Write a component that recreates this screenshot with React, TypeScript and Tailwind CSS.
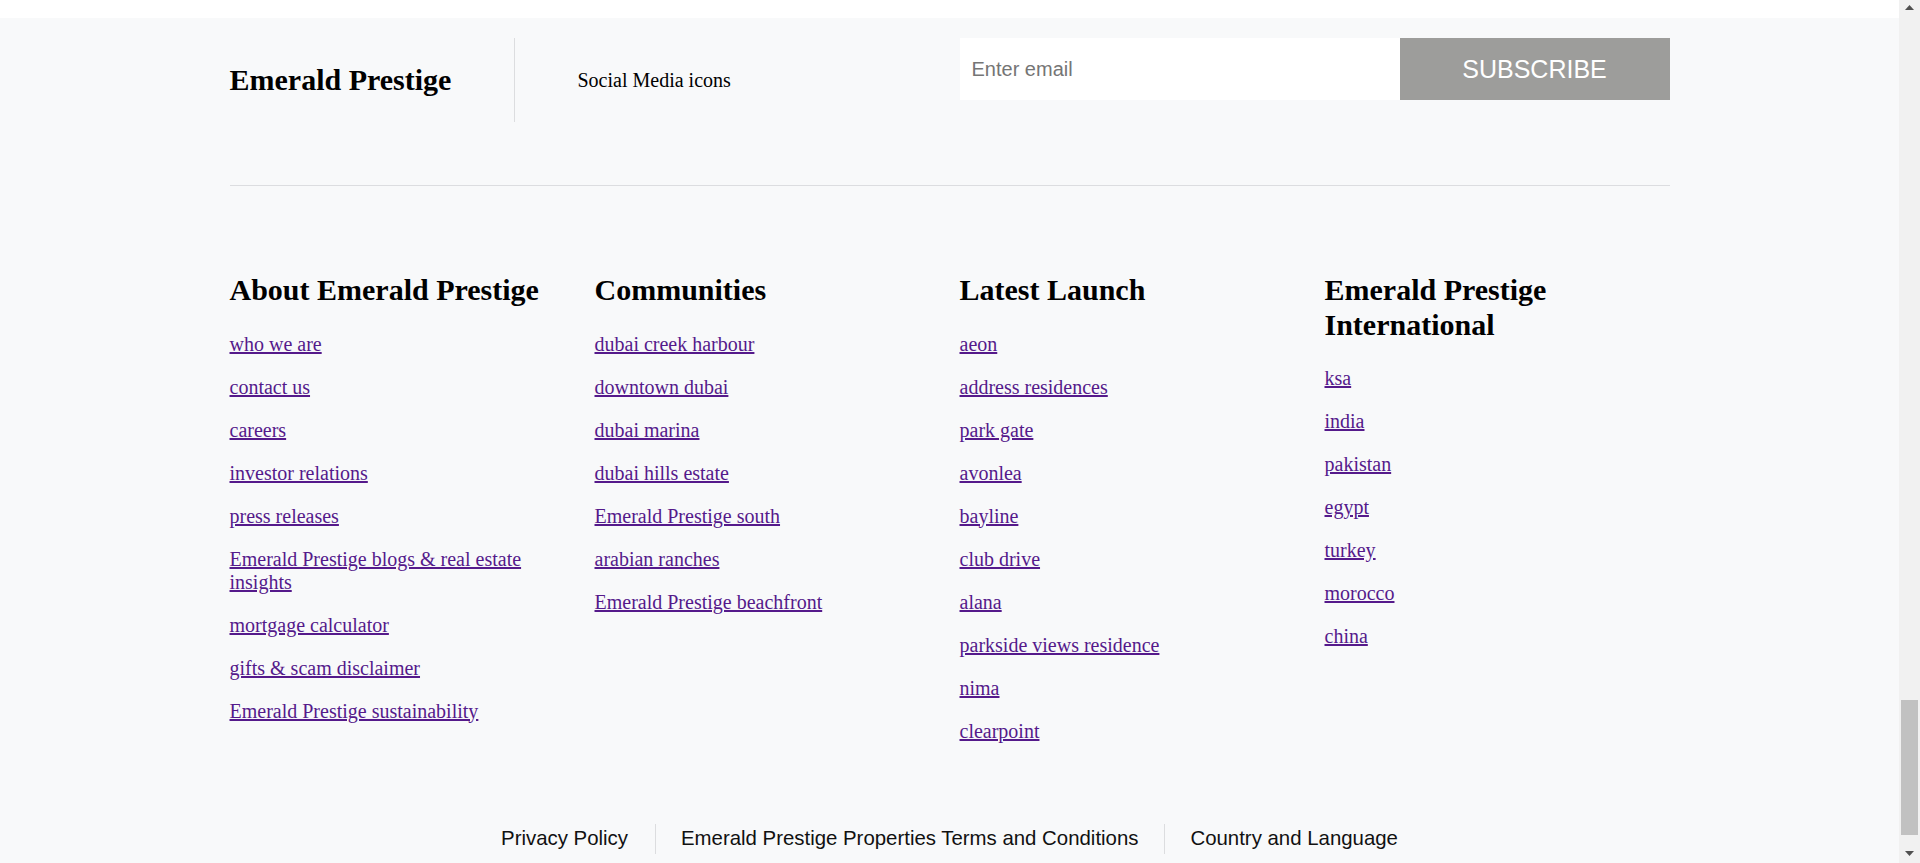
import React from "react";

const serif = "font-['Liberation_Serif','Times_New_Roman',serif]";
const sans = "font-['Liberation_Sans',Arial,sans-serif]";

const columns: { title: string[]; links: string[] }[] = [
  {
    title: ["About Emerald Prestige"],
    links: [
      "who we are",
      "contact us",
      "careers",
      "investor relations",
      "press releases",
      "Emerald Prestige blogs & real estate insights",
      "mortgage calculator",
      "gifts & scam disclaimer",
      "Emerald Prestige sustainability",
    ],
  },
  {
    title: ["Communities"],
    links: [
      "dubai creek harbour",
      "downtown dubai",
      "dubai marina",
      "dubai hills estate",
      "Emerald Prestige south",
      "arabian ranches",
      "Emerald Prestige beachfront",
    ],
  },
  {
    title: ["Latest Launch"],
    links: [
      "aeon",
      "address residences",
      "park gate",
      "avonlea",
      "bayline",
      "club drive",
      "alana",
      "parkside views residence",
      "nima",
      "clearpoint",
    ],
  },
  {
    title: ["Emerald Prestige", "International"],
    links: ["ksa", "india", "pakistan", "egypt", "turkey", "morocco", "china"],
  },
];

export default function App() {
  return (
    <div className="flex h-[863px] w-[1920px] overflow-hidden bg-white">
      <div className="flex flex-1 flex-col">
        <div className="h-[18px] bg-white" />
        <footer className="flex-1 bg-[#f8f9fa] text-black">
          <div className="mx-auto w-[1440px] pt-[20px]">
            {/* top row */}
            <div className="flex items-start">
              <div className="flex h-[84px] w-[285px] items-center border-r border-[#dcdddf]">
                <span className={`${serif} text-[30px] font-bold leading-[1.15]`}>
                  Emerald Prestige
                </span>
              </div>
              <div className="flex h-[84px] items-center pl-[63px]">
                <span className={`${serif} text-[20px] leading-[1.15]`}>Social Media icons</span>
              </div>
              <form className="ml-auto flex h-[62px] w-[710px]" onSubmit={(e) => e.preventDefault()}>
                <input
                  type="email"
                  placeholder="Enter email"
                  className={`${sans} h-full w-[440px] bg-white px-3 text-[20px] text-black outline-none placeholder:text-[#757575]`}
                />
                <button
                  type="submit"
                  className={`${sans} flex h-full flex-1 items-center justify-center bg-[#9d9d9b] pt-px text-[25px] text-white`}
                >
                  SUBSCRIBE
                </button>
              </form>
            </div>

            <div className="mt-[63px] h-px bg-[#dcdde0]" />

            {/* link columns */}
            <div className="grid grid-cols-4 gap-x-5 pt-[87px]">
              {columns.map((col) => (
                <div key={col.title.join(" ")} className={serif}>
                  <h2 className="mb-[25px] text-[30px] font-bold leading-[1.15]">
                    {col.title.map((t, i) => (
                      <React.Fragment key={t}>
                        {i > 0 && <br />}
                        {t}
                      </React.Fragment>
                    ))}
                  </h2>
                  <ul className="flex flex-col gap-5">
                    {col.links.map((l) => (
                      <li key={l} className="pr-6 text-[20px] leading-[23px]">
                        <a href="#" className="text-[#551a8b] underline">
                          {l}
                        </a>
                      </li>
                    ))}
                  </ul>
                </div>
              ))}
            </div>

            {/* bottom links */}
            <div className={`${sans} mt-[81px] flex justify-center text-[20.4px] text-[#111]`}>
              <span className="flex h-[30px] items-center pl-[26px] pr-[27px]">Privacy Policy</span>
              <span className="flex h-[30px] items-center border-l border-[#dcdddf] pl-[25px] pr-[26px]">
                Emerald Prestige Properties Terms and Conditions
              </span>
              <span className="flex h-[30px] items-center border-l border-[#dcdddf] pl-[25px] pr-[26px]">
                Country and Language
              </span>
            </div>
          </div>
        </footer>
      </div>

      {/* browser scrollbar */}
      <div className="flex h-full w-[21px] flex-col items-center bg-[#f1f1f1]">
        <div className="flex h-[17px] w-full items-start justify-center pt-[5px]">
          <svg width="9" height="5" viewBox="0 0 9 5">
            <polygon points="4.5,0 9,5 0,5" fill="#505050" />
          </svg>
        </div>
        <div className="mt-auto h-[135px] w-[17px] bg-[#c1c1c1]" />
        <div className="flex h-[28px] w-full items-start justify-center pt-[16px]">
          <svg width="9" height="5" viewBox="0 0 9 5">
            <polygon points="0,0 9,0 4.5,5" fill="#505050" />
          </svg>
        </div>
      </div>
    </div>
  );
}
